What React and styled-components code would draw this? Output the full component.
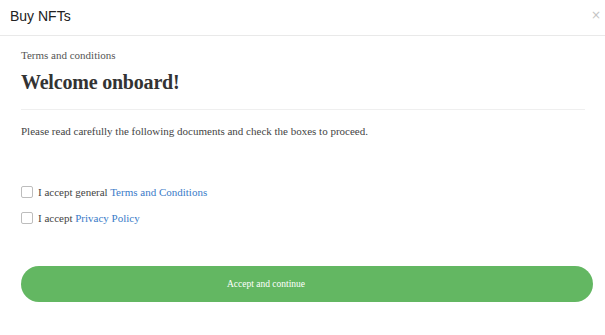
import { useState } from 'react'
import styled, { createGlobalStyle } from 'styled-components'

const GlobalStyle = createGlobalStyle`
    body {
        margin: 0;
        background: #FFFFFF;
    }
`

export default function App() {
    const [checks, setChecks] = useState({ terms: false, privacy: false })

    function toggle(name) {
        setChecks({ ...checks, [name]: !checks[name] })
    }

    return (
        <>
            <GlobalStyle />
            <Modal>
                <Header>
                    <HeaderTitle>Buy NFTs</HeaderTitle>
                    <CloseButton aria-label="close">×</CloseButton>
                </Header>
                <Body>
                    <Eyebrow>Terms and conditions</Eyebrow>
                    <Title>Welcome onboard!</Title>
                    <Divider />
                    <Intro>Please read carefully the following documents and check the boxes to proceed.</Intro>
                    <CheckList>
                        <CheckRow>
                            <CheckBox type="checkbox" checked={checks.terms} onChange={() => toggle('terms')} />
                            <span>I accept general <DocLink href="#">Terms and Conditions</DocLink></span>
                        </CheckRow>
                        <CheckRow>
                            <CheckBox type="checkbox" checked={checks.privacy} onChange={() => toggle('privacy')} />
                            <span>I accept <DocLink href="#">Privacy Policy</DocLink></span>
                        </CheckRow>
                    </CheckList>
                    <AcceptButton>Accept and continue</AcceptButton>
                </Body>
            </Modal>
        </>
    )
}

const Modal = styled.div`
    width: 605px;
    height: 335px;
    background: #FFFFFF;
    display: flex;
    flex-direction: column;
`

const Header = styled.div`
    height: 36px;
    box-sizing: border-box;
    border-bottom: 1px solid #E9E9E9;
    display: flex;
    align-items: center;
    justify-content: space-between;
    padding: 0 4px 3px 10px;
`

const HeaderTitle = styled.div`
    font-family: 'Liberation Sans', Arial, sans-serif;
    font-size: 14px;
    color: #222222;
`

const CloseButton = styled.button`
    border: none;
    background: none;
    padding: 0 0 3px;
    font-family: 'DejaVu Sans', sans-serif;
    font-size: 12px;
    line-height: 12px;
    color: #C4C4C4;
    cursor: pointer;
`

const Body = styled.div`
    display: flex;
    flex-direction: column;
    padding: 12px 12px 0 21px;
    font-family: 'Liberation Serif', 'Times New Roman', serif;
`

const Eyebrow = styled.div`
    font-size: 11px;
    line-height: 14px;
    color: #555555;
`

const Title = styled.h1`
    margin: 8px 0 0;
    font-size: 20px;
    line-height: 24px;
    font-weight: 700;
    letter-spacing: -0.2px;
    color: #333333;
`

const Divider = styled.div`
    height: 1px;
    background: #EFEFEF;
    margin: 15px 8px 0 0;
`

const Intro = styled.p`
    margin: 14px 0 0;
    font-size: 11px;
    line-height: 14px;
    color: #444444;
`

const CheckList = styled.div`
    display: flex;
    flex-direction: column;
    gap: 12px;
    margin-top: 47px;
`

const CheckRow = styled.label`
    display: flex;
    align-items: center;
    gap: 5px;
    font-size: 11px;
    line-height: 14px;
    color: #444444;
`

const CheckBox = styled.input`
    appearance: none;
    width: 12px;
    height: 12px;
    margin: 0;
    border: 1px solid #BDBDBD;
    border-radius: 2px;
    background: #FFFFFF;
    box-sizing: border-box;
    &:checked {
        background: #63B762;
        border-color: #63B762;
    }
`

const DocLink = styled.a`
    color: #3A7BC8;
    text-decoration: none;
`

const AcceptButton = styled.button`
    margin-top: 41px;
    width: 572px;
    height: 36px;
    border: none;
    border-radius: 18px;
    background: #63B762;
    color: #FFFFFF;
    font-family: 'Liberation Serif', 'Times New Roman', serif;
    font-size: 9.5px;
    padding: 0 82px 0 0;
    cursor: pointer;
`
